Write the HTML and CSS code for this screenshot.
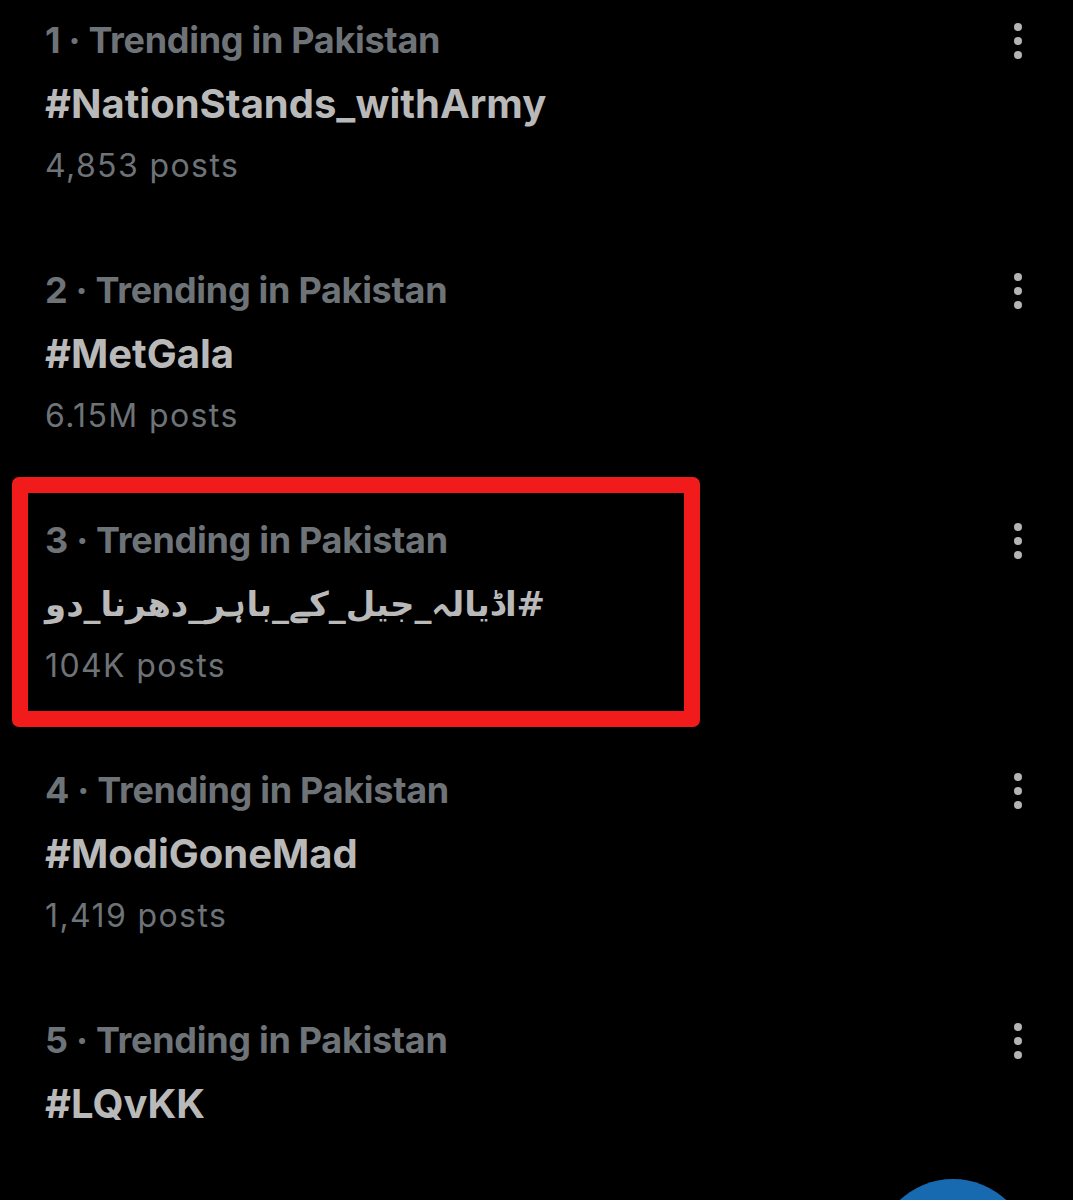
FILE: index.html
```html
<!DOCTYPE html>
<html>
<head>
<meta charset="utf-8">
<link rel="stylesheet" href="styles.css">
</head>
<body>
<div class="screen">
<div class="list">
  <div class="trend">
    <div class="text">
      <div class="label">1 · Trending in Pakistan</div>
      <div class="title">#NationStands_withArmy</div>
      <div class="count">4,853 posts</div>
    </div>
    <div class="more"><span></span><span></span><span></span></div>
  </div>
  <div class="trend">
    <div class="text">
      <div class="label">2 · Trending in Pakistan</div>
      <div class="title">#MetGala</div>
      <div class="count">6.15M posts</div>
    </div>
    <div class="more"><span></span><span></span><span></span></div>
  </div>
  <div class="trend highlighted">
    <div class="text">
      <div class="label">3 · Trending in Pakistan</div>
      <div class="title urdu" dir="rtl">#اڈیالہ_جیل_کے_باہر_دھرنا_دو</div>
      <div class="count">104K posts</div>
    </div>
    <div class="more"><span></span><span></span><span></span></div>
    <div class="mark"></div>
  </div>
  <div class="trend">
    <div class="text">
      <div class="label">4 · Trending in Pakistan</div>
      <div class="title">#ModiGoneMad</div>
      <div class="count">1,419 posts</div>
    </div>
    <div class="more"><span></span><span></span><span></span></div>
  </div>
  <div class="trend last">
    <div class="text">
      <div class="label">5 · Trending in Pakistan</div>
      <div class="title">#LQvKK</div>
    </div>
    <div class="more"><span></span><span></span><span></span></div>
  </div>
</div>
<div class="fab"></div>
</div>
</body>
</html>
```

FILE: styles.css
```css
html, body {
  margin: 0;
  padding: 0;
  background: #000;
}
body {
  font-family: Inter, Roboto, "Liberation Sans", sans-serif;
}
.screen {
  width: 1073px;
  height: 1200px;
  overflow: hidden;
  position: relative;
}
.list {
  display: flex;
  flex-direction: column;
}
.trend {
  position: relative;
  height: 250px;
  box-sizing: border-box;
  padding: 9px 0 0 45px;
  display: flex;
  justify-content: space-between;
  align-items: flex-start;
}
.trend.last {
  height: 190px;
}
.text {
  display: flex;
  flex-direction: column;
}
.label {
  font-size: 36px;
  line-height: 62px;
  font-weight: 700;
  color: #6e7378;
  letter-spacing: -0.3px;
}
.title {
  margin-top: 2px;
  font-size: 40px;
  line-height: 62px;
  font-weight: 700;
  color: #b9b9b9;
  letter-spacing: 0;
}
.title.urdu {
  font-family: "DejaVu Sans", sans-serif;
  text-align: left;
  font-size: 34px;
}
.count {
  font-size: 32px;
  line-height: 62px;
  font-weight: 400;
  color: #6e7378;
  letter-spacing: 1.4px;
}
.more {
  width: 10px;
  margin: 14px 50px 0 0;
  display: flex;
  flex-direction: column;
  align-items: center;
  gap: 6px;
}
.more span {
  width: 8px;
  height: 8px;
  border-radius: 50%;
  background: #b4b4b4;
}
.mark {
  position: absolute;
  left: 12px;
  top: -23px;
  width: 688px;
  height: 250px;
  box-sizing: border-box;
  border: 16px solid #f21b1b;
  border-radius: 7px;
}
.fab {
  position: absolute;
  left: 875px;
  top: 1179px;
  width: 156px;
  height: 156px;
  border-radius: 50%;
  background: #1769b0;
}
```
